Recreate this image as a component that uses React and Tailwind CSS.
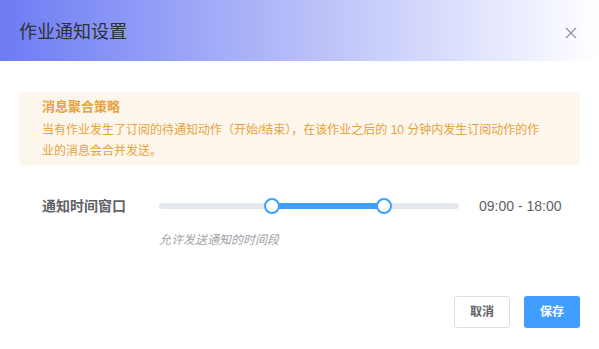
import React, { useState } from 'react';

const font = { fontFamily: '"Liberation Sans", "Noto Sans CJK SC", sans-serif' };

const RangeSlider = ({ start, end }) => {
  const left = (start / 24) * 100;
  const right = (end / 24) * 100;
  return (
    <div className="relative h-[32px] w-[300px] flex items-center">
      <div className="relative h-[6px] w-full rounded-full bg-[#e4e7ed]">
        <div
          className="absolute top-0 h-[6px] bg-[#409eff]"
          style={{ left: `${left}%`, width: `${right - left}%` }}
        />
        <div
          className="absolute top-1/2 h-[16px] w-[16px] -translate-x-1/2 -translate-y-1/2 rounded-full border-2 border-[#409eff] bg-white"
          style={{ left: `${left}%` }}
        />
        <div
          className="absolute top-1/2 h-[16px] w-[16px] -translate-x-1/2 -translate-y-1/2 rounded-full border-2 border-[#409eff] bg-white"
          style={{ left: `${right}%` }}
        />
      </div>
    </div>
  );
};

const App = () => {
  const [range] = useState([9, 18]);
  const fmt = (h) => `${String(h).padStart(2, '0')}:00`;

  return (
    <div className="h-[349px] w-full bg-white overflow-hidden" style={font}>
      <div className="flex h-[61px] items-center justify-between bg-gradient-to-r from-[#6e7bf3] via-[#b7bdf8] to-white pl-[19px] pr-[22px] pt-[4px]">
        <span className="text-[18px] text-[#303133]">作业通知设置</span>
        <button className="text-[#909399]">
          <svg width="12" height="12" viewBox="0 0 12 12" fill="none" stroke="currentColor" strokeWidth="1.2">
            <path d="M1 1l10 10M11 1L1 11" />
          </svg>
        </button>
      </div>

      <div className="px-[19px] pt-[31px]">
        <div className="rounded-[4px] bg-[#fdf6ec] px-[23px] pt-[4px] pb-[4px]">
          <div className="text-[13px] font-bold leading-[21px] text-[#e6a23c]">消息聚合策略</div>
          <div className="mt-[3px] text-[12px] leading-[21px] text-[#e6a23c]">
            当有作业发生了订阅的待通知动作（开始/结束），在该作业之后的 10 分钟内发生订阅动作的作
            <br />
            业的消息会合并发送。
          </div>
        </div>

        <div className="mt-[24px] flex items-center pl-[23px]">
          <div className="w-[117px] text-[14px] font-bold text-[#606266]">通知时间窗口</div>
          <RangeSlider start={range[0]} end={range[1]} />
          <div className="ml-[20px] text-[14px] text-[#606266]">
            {fmt(range[0])} - {fmt(range[1])}
          </div>
        </div>
        <div className="mt-[10px] pl-[140px] text-[12px] italic leading-[16px] text-[#a0a3a8]">
          允许发送通知的时间段
        </div>

        <div className="mt-[48px] flex justify-end gap-[14px]">
          <button className="h-[32px] w-[56px] rounded-[3px] border border-[#dcdfe6] bg-white text-[12px] font-bold text-[#606266]">
            取消
          </button>
          <button className="h-[32px] w-[56px] rounded-[3px] bg-[#409eff] text-[12px] font-bold text-white">
            保存
          </button>
        </div>
      </div>
    </div>
  );
};

export default App;
